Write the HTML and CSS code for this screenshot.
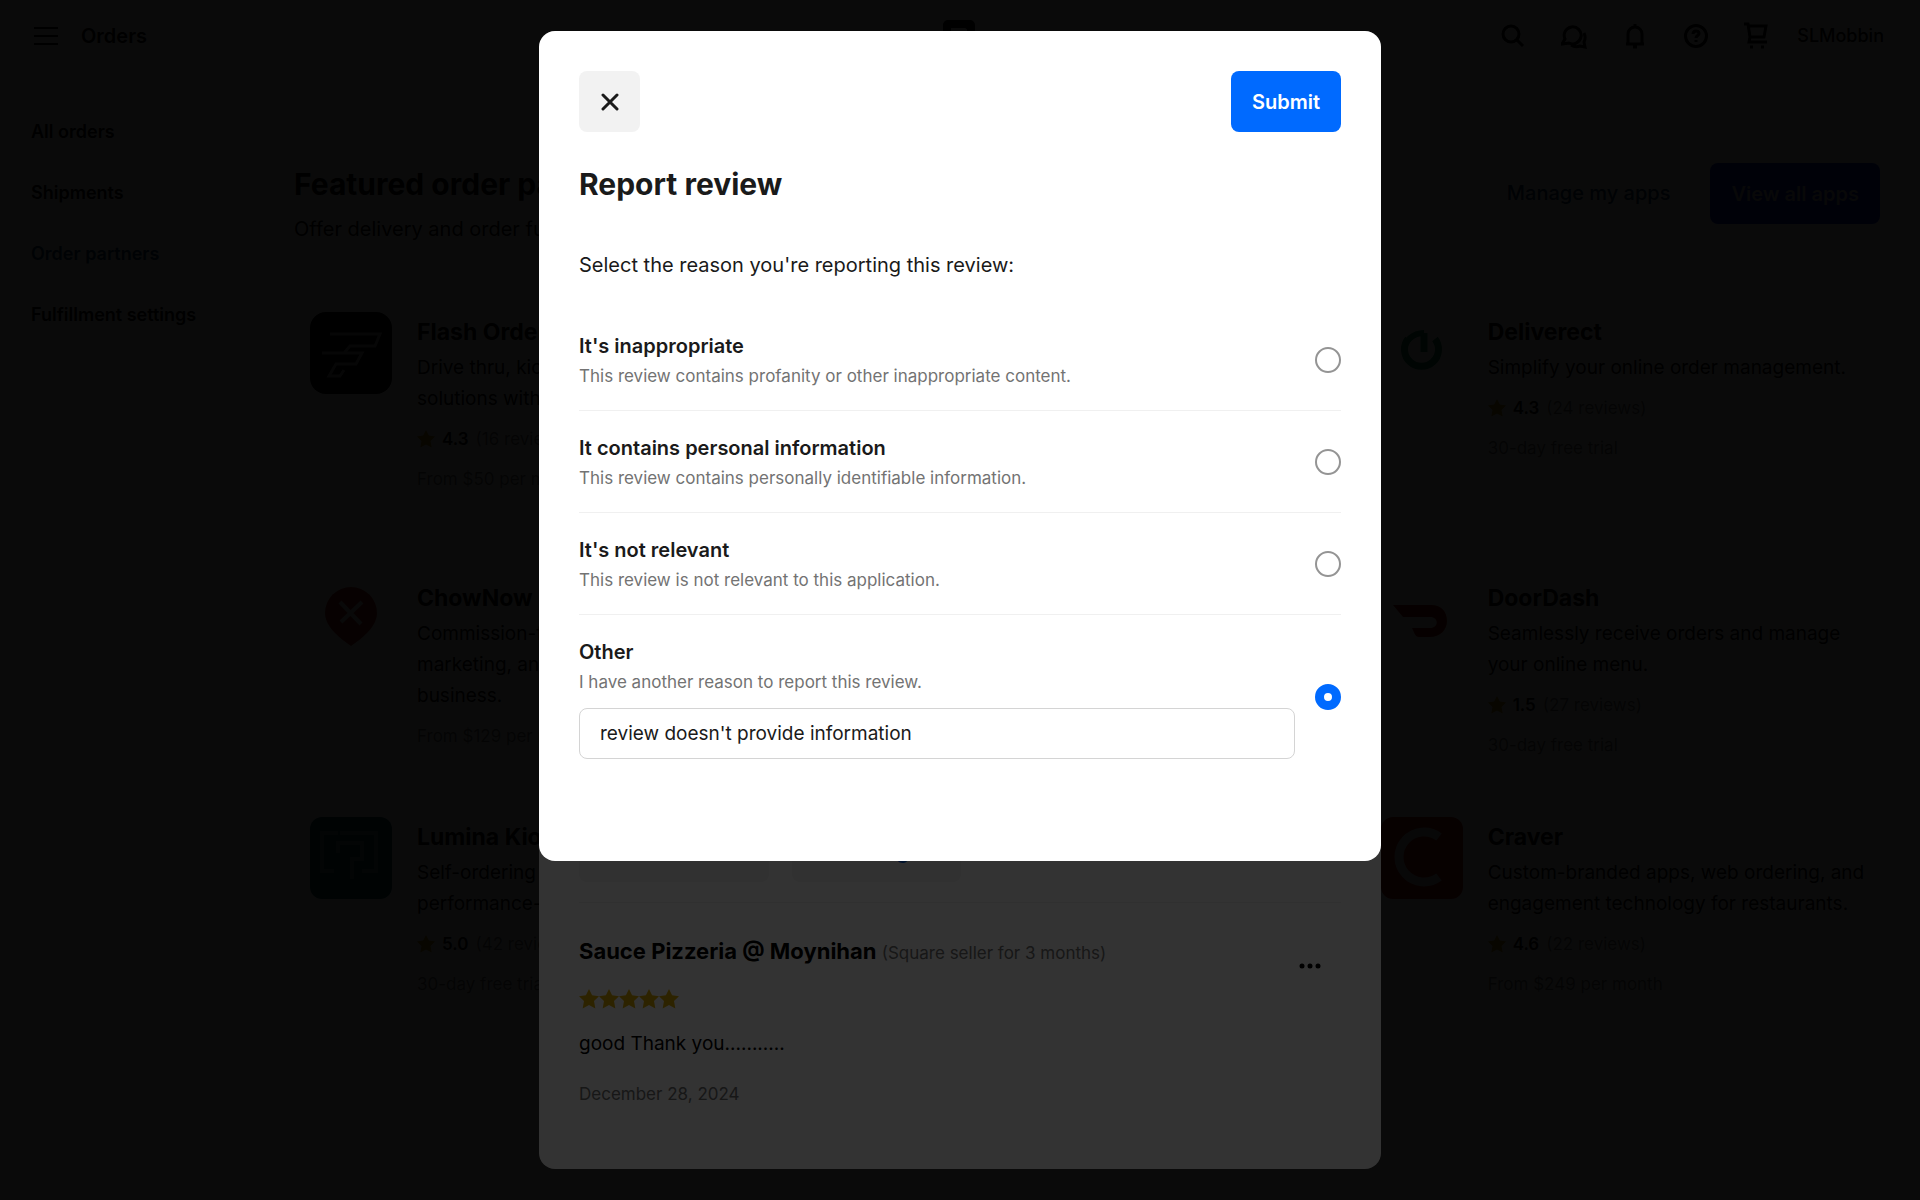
FILE: index.html
```
<!DOCTYPE html>
<html lang="en">
<head>
<meta charset="utf-8">
<meta name="viewport" content="width=device-width, initial-scale=1">
<title>Orders</title>
<link rel="stylesheet" href="styles.css">
</head>
<body>
<svg class="defs" aria-hidden="true">
  <symbol id="star" viewBox="1 1 18 18"><path d="M10 1l2.800 5.600 6.200.9-4.500 4.400 1.200 6.600L10 15.400 4.300 18.500l1.200-6.600L1 7.500l6.200-.9z"/></symbol>
</svg>
<div class="page">
  <header class="topbar">
    <button class="icon-btn menu" aria-label="Menu"><svg width="24" height="20" viewBox="0 0 24 20"><path d="M0 2h24M0 10h24M0 18h24"/></svg></button>
    <span class="section">Orders</span>
    <svg class="brand" width="32" height="32" viewBox="0 0 32 32"><path fill-rule="evenodd" d="M5 0h22a5 5 0 0 1 5 5v22a5 5 0 0 1-5 5H5a5 5 0 0 1-5-5V5a5 5 0 0 1 5-5zm3 8v16c0 1 1 2 2 2h12c1 0 2-1 2-2V10c0-1-1-2-2-2z"/></svg>
    <nav class="tools" aria-label="Tools">
      <button class="icon-btn" aria-label="Search"><svg width="26" height="26" viewBox="0 0 26 26"><circle cx="11" cy="11" r="8"/><path d="M17 17l6 6"/></svg></button>
      <button class="icon-btn" aria-label="Messages"><svg width="26" height="26" viewBox="0 0 26 26"><path d="M1 21l3-5a8.500 8.500 0 1 1 4 4z"/><path d="M23 10c2 4 1 7 0 9l1 5-5-1c-3 1-6 1-9-1"/></svg></button>
      <button class="icon-btn" aria-label="Notifications"><svg width="26" height="26" viewBox="0 0 26 26"><path d="M4 21h18M6 21V11a7 7 0 0 1 14 0v10M13 1v3M11 24h4"/></svg></button>
      <button class="icon-btn" aria-label="Help"><svg width="26" height="26" viewBox="0 0 26 26"><circle cx="13" cy="13" r="10.500"/><path d="M10 11c0-4 6-4 6-.5 0 2-3 2-3 4.500M13 17v2"/></svg></button>
      <button class="icon-btn" aria-label="Cart"><svg width="24" height="28" viewBox="0 0 24 28"><path d="M0 2h4l2 13h14l2-11H4M6 15l-1 5h18"/><path d="M6 25h3M17 25h3"/></svg></button>
      <a class="account" href="#">SLMobbin</a>
    </nav>
  </header>
  <div class="body">
    <nav class="sidebar" aria-label="Orders">
      <a href="#">All orders</a>
      <a href="#">Shipments</a>
      <a class="current" href="#">Order partners</a>
      <a href="#">Fulfillment settings</a>
    </nav>
    <main class="main">
      <div class="intro">
        <div>
          <h1>Featured order partners</h1>
          <p>Offer delivery and order fulfillment</p>
        </div>
        <div class="actions">
          <a class="manage" href="#">Manage my apps</a>
          <button class="primary all">View all apps</button>
        </div>
      </div>
      <div class="apps">
        <article class="app">
          <svg class="logo" viewBox="0 0 82 82"><rect width="82" height="82" rx="16"/><path d="M20 22h50l-5 12H40l-6 7H12M34 41h18l-6 11H26l-7 12h11l4-6" fill="none" stroke="#999" stroke-width="3"/></svg>
          <div><h2>Flash Order</h2><p>Drive thru, kiosk<br>solutions with</p><div class="rating"><svg width="18" height="18"><use href="#star"/></svg><b>4.3</b><span>(16 reviews)</span></div><div class="price">From $50 per month</div></div>
        </article>
        <article class="app last">
          <svg class="logo" viewBox="0 0 82 82"><path d="M43 21v19M27 27a17 17 0 1 0 27 0" fill="none" stroke="#007a48" stroke-width="7"/><path d="M43 21c-11 0-20 8-20 18" fill="none" stroke="#007a48" stroke-width="6"/></svg>
          <div><h2>Deliverect</h2><p>Simplify your online order management.</p><div class="rating"><svg width="18" height="18"><use href="#star"/></svg><b>4.3</b><span>(24 reviews)</span></div><div class="price">30-day free trial</div></div>
        </article>
        <article class="app">
          <svg class="logo" viewBox="0 0 82 82"><path d="M41 9a26 26 0 0 1 26 26c0 13-13 24-26 33C28 59 15 48 15 35A26 26 0 0 1 41 9z" fill="#b02a25"/><path d="M30 24l21 22M52 24L31 44" stroke="#ddd" stroke-width="4"/></svg>
          <div><h2>ChowNow</h2><p>Commission-free<br>marketing, and<br>business.</p><div class="price">From $129 per month</div></div>
        </article>
        <article class="app last">
          <svg class="logo" viewBox="0 0 82 82"><path d="M12 27h38c11 0 16 7 16 16s-7 16-17 16H38c-4 0-5-5-7-9h18c9 0 9-11 0-11H22z" fill="#a01000"/></svg>
          <div><h2>DoorDash</h2><p>Seamlessly receive orders and manage your online menu.</p><div class="rating"><svg width="18" height="18"><use href="#star"/></svg><b>1.5</b><span>(27 reviews)</span></div><div class="price">30-day free trial</div></div>
        </article>
        <article class="app">
          <svg class="logo" viewBox="0 0 82 82"><rect width="82" height="82" rx="12" fill="#00505a"/><path d="M28 16H12v38h12M30 16h36v38H52M28 36V26h24v16H42v20" fill="none" stroke="#4d8585" stroke-width="4"/></svg>
          <div><h2>Lumina Kiosk</h2><p>Self-ordering<br>performance-</p><div class="rating"><svg width="18" height="18"><use href="#star"/></svg><b>5.0</b><span>(42 reviews)</span></div><div class="price">30-day free trial</div></div>
        </article>
        <article class="app last">
          <svg class="logo" viewBox="0 0 82 82"><rect width="82" height="82" rx="12" fill="#b01a10"/><path d="M58 20a25 25 0 1 0 0 40" fill="none" stroke="#ccc" stroke-width="9"/></svg>
          <div><h2>Craver</h2><p>Custom-branded apps, web ordering, and engagement technology for restaurants.</p><div class="rating"><svg width="18" height="18"><use href="#star"/></svg><b>4.6</b><span>(22 reviews)</span></div><div class="price">From $249 per month</div></div>
        </article>
      </div>
    </main>
  </div>
</div>

<div class="overlay">
  <section class="dialog reviews" aria-label="Reviews">
    <div class="chips"><div class="chip wide"></div><button class="chip">Message</button></div>
    <article class="review">
      <div>
        <h3>Sauce Pizzeria @ Moynihan <small>(Square seller for 3 months)</small></h3>
        <div class="stars" role="img" aria-label="5 stars"><svg width="20" height="20"><use href="#star"/></svg><svg width="20" height="20"><use href="#star"/></svg><svg width="20" height="20"><use href="#star"/></svg><svg width="20" height="20"><use href="#star"/></svg><svg width="20" height="20"><use href="#star"/></svg></div>
        <p>good Thank you...........</p>
        <time datetime="2024-12-28">December 28, 2024</time>
      </div>
      <button class="more" aria-label="More"><svg width="22" height="6" viewBox="0 0 22 6"><circle cx="3" cy="3" r="2.500"/><circle cx="11" cy="3" r="2.500"/><circle cx="19" cy="3" r="2.500"/></svg></button>
    </article>
  </section>
</div>

<div class="overlay">
  <form class="dialog report" role="dialog" aria-modal="true" aria-labelledby="report-title">
    <div class="bar">
      <button class="close" type="button" aria-label="Close"><svg width="18" height="18" viewBox="0 0 18 18"><path d="M2 2l14 14M16 2L2 16"/></svg></button>
      <button class="primary" type="submit">Submit</button>
    </div>
    <h2 id="report-title">Report review</h2>
    <p class="lead">Select the reason you're reporting this review:</p>
    <div class="option">
      <label for="r1"><strong>It's inappropriate</strong><span>This review contains profanity or other inappropriate content.</span></label>
      <input type="radio" name="reason" id="r1">
    </div>
    <div class="option">
      <label for="r2"><strong>It contains personal information</strong><span>This review contains personally identifiable information.</span></label>
      <input type="radio" name="reason" id="r2">
    </div>
    <div class="option">
      <label for="r3"><strong>It's not relevant</strong><span>This review is not relevant to this application.</span></label>
      <input type="radio" name="reason" id="r3">
    </div>
    <div class="option">
      <div class="grow">
        <label for="r4"><strong>Other</strong><span>I have another reason to report this review.</span></label>
        <input class="field" type="text" aria-label="Other reason" value="review doesn't provide information">
      </div>
      <input type="radio" name="reason" id="r4" checked>
    </div>
  </form>
</div>
</body>
</html>
```
FILE: styles.css
```
* { box-sizing: border-box; }
body { margin: 0; background: #fff; color: #000; font: 20px/30px Inter, "Liberation Sans", sans-serif; }
h1, h2, h3, p { margin: 0; }
a { color: inherit; text-decoration: none; }
button { font: inherit; border: 0; padding: 0; background: none; color: inherit; }
.defs { position: absolute; width: 0; height: 0; }

.page { height: 100vh; overflow: hidden; }
.topbar { display: grid; grid-template-columns: auto 1fr auto 1fr; align-items: center; height: 72px; padding: 0 36px 0 34px; }
.icon-btn { display: flex; }
.icon-btn svg { fill: none; stroke: #000; stroke-width: 3; }
.menu svg { stroke-width: 2; }
.section { margin-left: 23px; font-size: 20px; font-weight: 600; }
.brand { margin-right: 24px; }
.tools { display: flex; justify-content: flex-end; align-items: center; gap: 35px; }
.account { margin-left: -6px; font-size: 18px; font-weight: 500; }
.body { display: flex; gap: 39px; padding-top: 30px; }
.sidebar { flex: 0 0 255px; font-size: 18px; font-weight: 600; }
.sidebar a { display: block; padding: 15px 31px 16px; }
.sidebar .current { background: #f5f5f5; color: #003f70; }
.main { flex: 1; padding: 58px 40px 0 0; }
.intro { display: flex; justify-content: space-between; height: 152px; }
.intro h1 { font-size: 30px; line-height: 48px; font-weight: 700; }
.intro p { padding-top: 6px; }
.actions { display: flex; align-items: flex-start; gap: 40px; padding-top: 3px; }
.actions a { line-height: 61px; font-weight: 500; color: #002f60; }
.primary { height: 61px; padding: 0 21px; border-radius: 8px; background: #006aff; color: #fff; font-weight: 600; }
.primary.all { background: #0020d0; color: #bbb; }
.apps { display: grid; grid-template-columns: repeat(3, 1fr); grid-template-rows: 266px 239px auto; padding-left: 16px; margin-right: -36px; }
.app { display: flex; gap: 25px; padding-right: 40px; }
.app.last { grid-column: 3; }
.logo { flex: 0 0 82px; height: 82px; }
.app h2 { font-size: 23px; line-height: 40px; font-weight: 700; }
.app p { font-size: 19px; line-height: 31px; }
.rating { display: flex; align-items: center; gap: 7px; padding: 10px 0; font-size: 17px; }
.rating svg { fill: #c09000; }
.rating b { font-weight: 600; }
.rating span, .price { color: #737373; font-size: 17px; }
.app p + .price { padding-top: 10px; }

.overlay { position: fixed; inset: 0; display: flex; justify-content: center; align-items: flex-start; padding: 31px 24px; background: rgba(0, 0, 0, .8); }
.dialog { width: 100%; max-width: 842px; padding: 40px; border-radius: 16px; background: #fff; }
.reviews { display: flex; flex-direction: column; justify-content: flex-end; align-self: stretch; padding-bottom: 60px; }
.chips { display: flex; gap: 23px; padding-bottom: 20px; border-bottom: 1px solid #f0f0f0; }
.chip { width: 169px; height: 61px; border-radius: 8px; background: #f2f2f2; color: #005ad9; font-weight: 600; }
.chip.wide { width: 190px; }
.review { display: flex; justify-content: space-between; padding-top: 32px; }
.review h3 { font-size: 22px; line-height: 32px; font-weight: 700; }
.review small { font-size: 17px; font-weight: 400; color: #737373; }
.stars { display: flex; height: 20px; margin: 20px 0; }
.stars svg { fill: #e0b000; }
.review p { padding: 0 0 20px; font-size: 19px; }
.review time { display: block; font-size: 17px; color: #737373; }
.more { display: flex; align-self: flex-start; padding: 28px 20px; }

.report { min-height: 830px; color: #1a1a1a; }
.bar { display: flex; justify-content: space-between; }
.close { display: grid; place-items: center; width: 61px; height: 61px; border-radius: 8px; background: #f2f2f2; }
.close svg { fill: none; stroke: #1a1a1a; stroke-width: 3; stroke-linecap: round; }
.report h2 { padding-top: 32px; font-size: 30px; line-height: 40px; font-weight: 700; }
.lead { padding: 46px 0 29px; }
.option { display: flex; justify-content: space-between; align-items: center; gap: 20px; padding: 20px 0; }
.option + .option { border-top: 1px solid #f0f0f0; }
.option label { display: block; padding-top: 2px; margin-bottom: -2px; }
.option strong { display: block; font-weight: 600; }
.option span { display: block; font-size: 17px; line-height: 31px; color: #737373; }
.grow { flex: 1; }
.field { display: block; width: 100%; height: 51px; margin-top: 12px; padding: 0 20px; border: 1px solid #d4d4d4; border-radius: 8px; background: #fff; color: #1a1a1a; font: inherit; font-size: 19px; }
input[type="radio"] { appearance: none; flex: none; width: 26px; height: 26px; margin: 0; border: 2px solid #949494; border-radius: 50%; background: #fff; }
input[type="radio"]:checked { border: 9px solid #006aff; }
```
